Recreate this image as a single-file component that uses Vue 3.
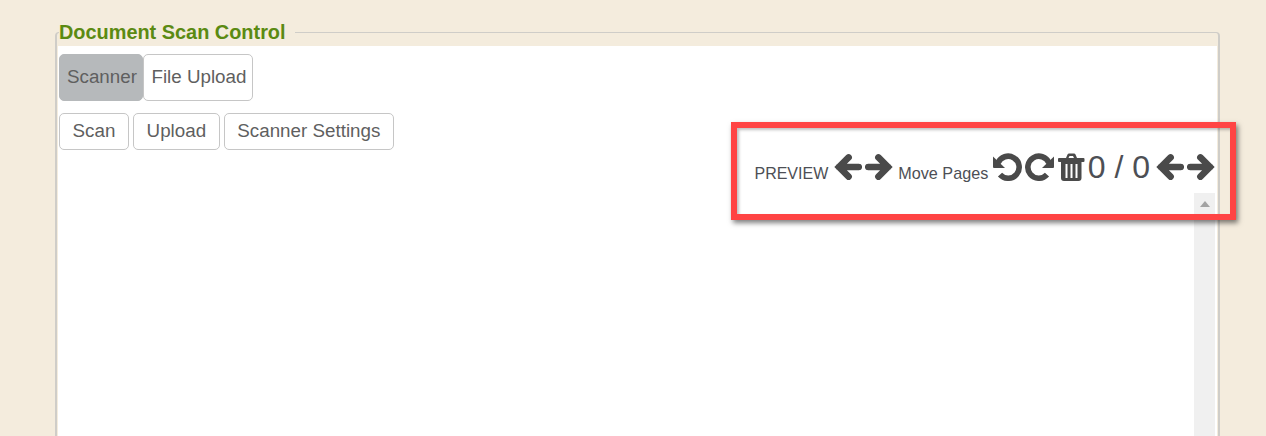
<template>
  <div class="page">
    <fieldset class="scan-control">
      <legend>Document Scan Control</legend>
      <div class="panel">
        <div class="tabs">
          <button
            v-for="tab in tabs"
            :key="tab"
            class="btn tab"
            :class="{ active: tab === activeTab }"
          >
            {{ tab }}
          </button>
        </div>

        <div class="workspace">
          <div class="actions">
            <button v-for="action in actions" :key="action" class="btn action">{{ action }}</button>
          </div>

          <div class="preview">
            <div class="toolbar">
              <span class="label preview-label">PREVIEW</span>
              <svg class="icon arrow" viewBox="0 0 28 28"><path class="line" :d="arrowLeft" /></svg>
              <svg class="icon arrow" viewBox="0 0 28 28"><path class="line" :d="arrowRight" /></svg>
              <span class="label move-label">Move Pages</span>
              <svg class="icon turn" viewBox="0 0 30 28"><path class="arc" :d="turnArc" /><path :d="turnHead" /></svg>
              <svg class="icon turn" viewBox="0 0 30 28">
                <g transform="matrix(-1 0 0 1 30 0)"><path class="arc" :d="turnArc" /><path :d="turnHead" /></g>
              </svg>
              <svg class="icon trash" viewBox="0 0 27 28"><path fill-rule="evenodd" :d="trash" /></svg>
              <span class="count">0 / 0</span>
              <svg class="icon arrow" viewBox="0 0 28 28"><path class="line" :d="arrowLeft" /></svg>
              <svg class="icon arrow" viewBox="0 0 28 28"><path class="line" :d="arrowRight" /></svg>
            </div>
            <div class="scrollbar">
              <span class="scroll-up"></span>
            </div>
          </div>
        </div>
      </div>
    </fieldset>
    <div class="callout"></div>
  </div>
</template>

<script setup>
const tabs = ['Scanner', 'File Upload']
const activeTab = 'Scanner'
const actions = ['Scan', 'Upload', 'Scanner Settings']

// icons are hand drawn on a small grid, the right arrow mirrors the left one
const arrowLeft = 'M14.6 4.4L5 14L14.6 23.6M5 14H24.8'
const arrowRight = 'M13.4 4.4L23 14L13.4 23.6M23 14H3.2'
const turnArc = 'M6 10A11 11 0 1 1 8 21.6'
const turnHead = 'M1 3.5L13 15H2Q1 15 1 14Z'
const trash =
  'M8 5L9.5 1.5Q10 .5 11 .5H16Q17 .5 17.5 1.5L19 5H25.5Q26.5 5 26.5 6V8Q26.5 9 25.5 9H23.5V25Q23.5 28 20.5 28H6Q3 28 3 25V9H1Q0 9 0 8V6Q0 5 1 5Z' +
  'M10.5 5H16L15 3H11.5Z' +
  'M7.5 11H9.5V25H7.5Z' +
  'M12.5 11H14.5V25H12.5Z' +
  'M17.5 11H19.5V25H17.5Z'
</script>

<style>
html,
body {
  margin: 0;
  height: 436px;
  overflow: hidden;
  background: #f4ecdd;
}
</style>

<style scoped>
.page {
  position: relative;
  height: 436px;
  overflow: hidden;
  padding: 21px 46px 0 55px;
  box-sizing: border-box;
  font-family: 'Liberation Sans', Arial, sans-serif;
}

.scan-control {
  margin: 0;
  padding: 2px 1px 0;
  height: 600px;
  box-sizing: border-box;
  border: solid #cfcdc8;
  border-width: 1px 2px;
  border-radius: 4px;
  min-width: 0;
}

legend {
  margin-left: 1px;
  padding: 0 9px 0 0;
  color: #5b8a12;
  font-size: 19.9px;
  font-weight: 700;
  line-height: 23px;
}

.panel {
  background: #fff;
  height: 100%;
  padding: 8px 1px 0;
  box-sizing: border-box;
}

.tabs {
  display: flex;
}

.btn {
  box-sizing: border-box;
  background: #fff;
  color: #5f5f5f;
  border: 1px solid #c6c6c6;
  border-radius: 5px;
  font-family: inherit;
  font-size: 18.8px;
  padding: 0 0 2px;
}

.tab {
  height: 47px;
  padding-left: 7px;
  padding-right: 5.5px;
}

.tab.active {
  background: #b6b9bb;
  border-color: #b6b9bb;
}

.workspace {
  display: flex;
  justify-content: space-between;
  align-items: flex-start;
  margin-top: 12px;
}

.actions {
  display: flex;
  gap: 4px;
}

.action {
  height: 37px;
  padding-left: 12.6px;
  padding-right: 12.6px;
}

.preview {
  display: flex;
  flex-direction: column;
  align-items: flex-end;
  margin-top: 34px;
  margin-right: 1px;
}

.toolbar {
  display: flex;
  align-items: center;
  box-sizing: border-box;
  height: 46px;
  padding-bottom: 6px;
}

.label {
  font-size: 16px;
  color: #4d4f55;
  margin-top: 13px;
}

.preview-label {
  margin-right: 6px;
}

.move-label {
  font-size: 16.2px;
  margin: 13px 4px 0 5px;
}

.icon {
  fill: #4a4a4a;
  height: 28px;
  display: block;
}

.line {
  fill: none;
  stroke: #4a4a4a;
  stroke-width: 6.6;
  stroke-linejoin: miter;
  stroke-linecap: round;
}

.arc {
  fill: none;
  stroke: #4a4a4a;
  stroke-width: 5.6;
}

.arrow {
  width: 28px;
}

.arrow + .arrow {
  margin-left: 3px;
}

.turn {
  width: 30px;
  margin-right: 3px;
}

.trash {
  width: 27px;
}

.count {
  font-size: 32px;
  margin: 0 6px 0 2.5px;
  color: #4d4f55;
}

.scrollbar {
  width: 21px;
  height: 400px;
  background: #f0f0f0;
  display: flex;
  justify-content: center;
}

.scroll-up {
  width: 0;
  height: 0;
  margin-top: 8px;
  border-left: 5px solid transparent;
  border-right: 5px solid transparent;
  border-bottom: 6px solid #a3a3a3;
}

.callout {
  position: absolute;
  left: 731px;
  top: 122px;
  width: 505px;
  height: 98px;
  box-sizing: border-box;
  border: 6px solid #ff4444;
  box-shadow: 2px 3px 5px rgba(0, 0, 0, 0.5), inset 2px 2px 3px rgba(0, 0, 0, 0.25);
}
</style>
